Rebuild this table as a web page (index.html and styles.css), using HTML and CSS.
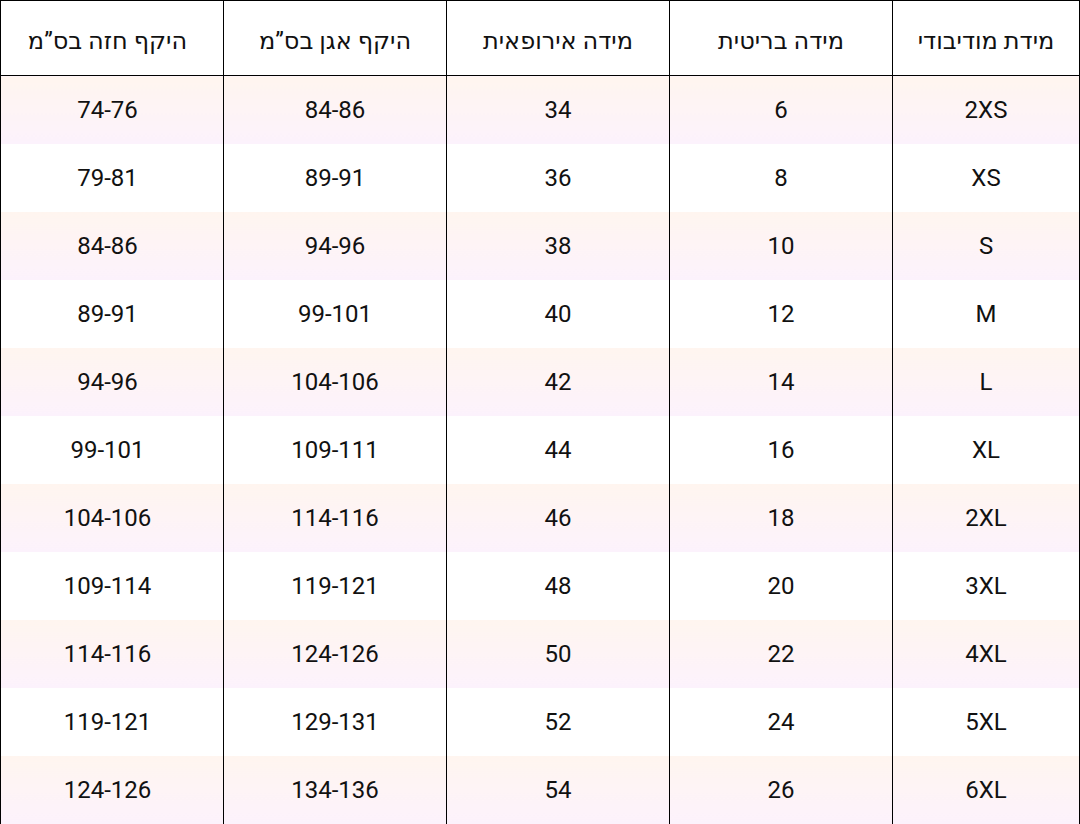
FILE: index.html
```html
<!DOCTYPE html>
<html lang="he" dir="rtl">
<head>
<meta charset="utf-8">
<link rel="stylesheet" href="styles.css">
</head>
<body>
<table class="size-table">
  <colgroup>
    <col class="c-first">
    <col class="c-other">
    <col class="c-other">
    <col class="c-other">
    <col class="c-other">
  </colgroup>
  <thead>
    <tr>
      <th>מידת מודיבודי</th>
      <th>מידה בריטית</th>
      <th>מידה אירופאית</th>
      <th>היקף אגן בס”מ</th>
      <th class="last">היקף חזה בס”מ</th>
    </tr>
  </thead>
  <tbody>
    <tr class="alt"><td>2XS</td><td>6</td><td>34</td><td>84-86</td><td class="last">74-76</td></tr>
    <tr><td>XS</td><td>8</td><td>36</td><td>89-91</td><td class="last">79-81</td></tr>
    <tr class="alt"><td>S</td><td>10</td><td>38</td><td>94-96</td><td class="last">84-86</td></tr>
    <tr><td>M</td><td>12</td><td>40</td><td>99-101</td><td class="last">89-91</td></tr>
    <tr class="alt"><td>L</td><td>14</td><td>42</td><td>104-106</td><td class="last">94-96</td></tr>
    <tr><td>XL</td><td>16</td><td>44</td><td>109-111</td><td class="last">99-101</td></tr>
    <tr class="alt"><td>2XL</td><td>18</td><td>46</td><td>114-116</td><td class="last">104-106</td></tr>
    <tr><td>3XL</td><td>20</td><td>48</td><td>119-121</td><td class="last">109-114</td></tr>
    <tr class="alt"><td>4XL</td><td>22</td><td>50</td><td>124-126</td><td class="last">114-116</td></tr>
    <tr><td>5XL</td><td>24</td><td>52</td><td>129-131</td><td class="last">119-121</td></tr>
    <tr class="alt"><td>6XL</td><td>26</td><td>54</td><td>134-136</td><td class="last">124-126</td></tr>
  </tbody>
</table>
</body>
</html>
```

FILE: styles.css
```css
html, body {
  margin: 0;
  padding: 0;
  background: #ffffff;
}

body {
  font-family: Roboto, "DejaVu Sans", sans-serif;
  color: #111111;
}

.size-table {
  border-collapse: collapse;
  table-layout: fixed;
  width: 1080px;
  border: 1px solid #000000;
}

.c-first {
  width: 187px;
}

.c-other {
  width: 223px;
}

.size-table th,
.size-table td {
  border-left: 1px solid #000000;
  border-right: 1px solid #000000;
  text-align: center;
  vertical-align: middle;
  padding: 0;
  font-size: 24px;
  font-weight: 400;
}

.size-table .last {
  padding-right: 9px;
}

.size-table th {
  height: 68px;
  padding-top: 6px;
  border-bottom: 1px solid #000000;
}

.size-table td {
  height: 68px;
}

.size-table tr.alt td {
  background: linear-gradient(to bottom, #fff5ef, #fcf2fc);
}
```
